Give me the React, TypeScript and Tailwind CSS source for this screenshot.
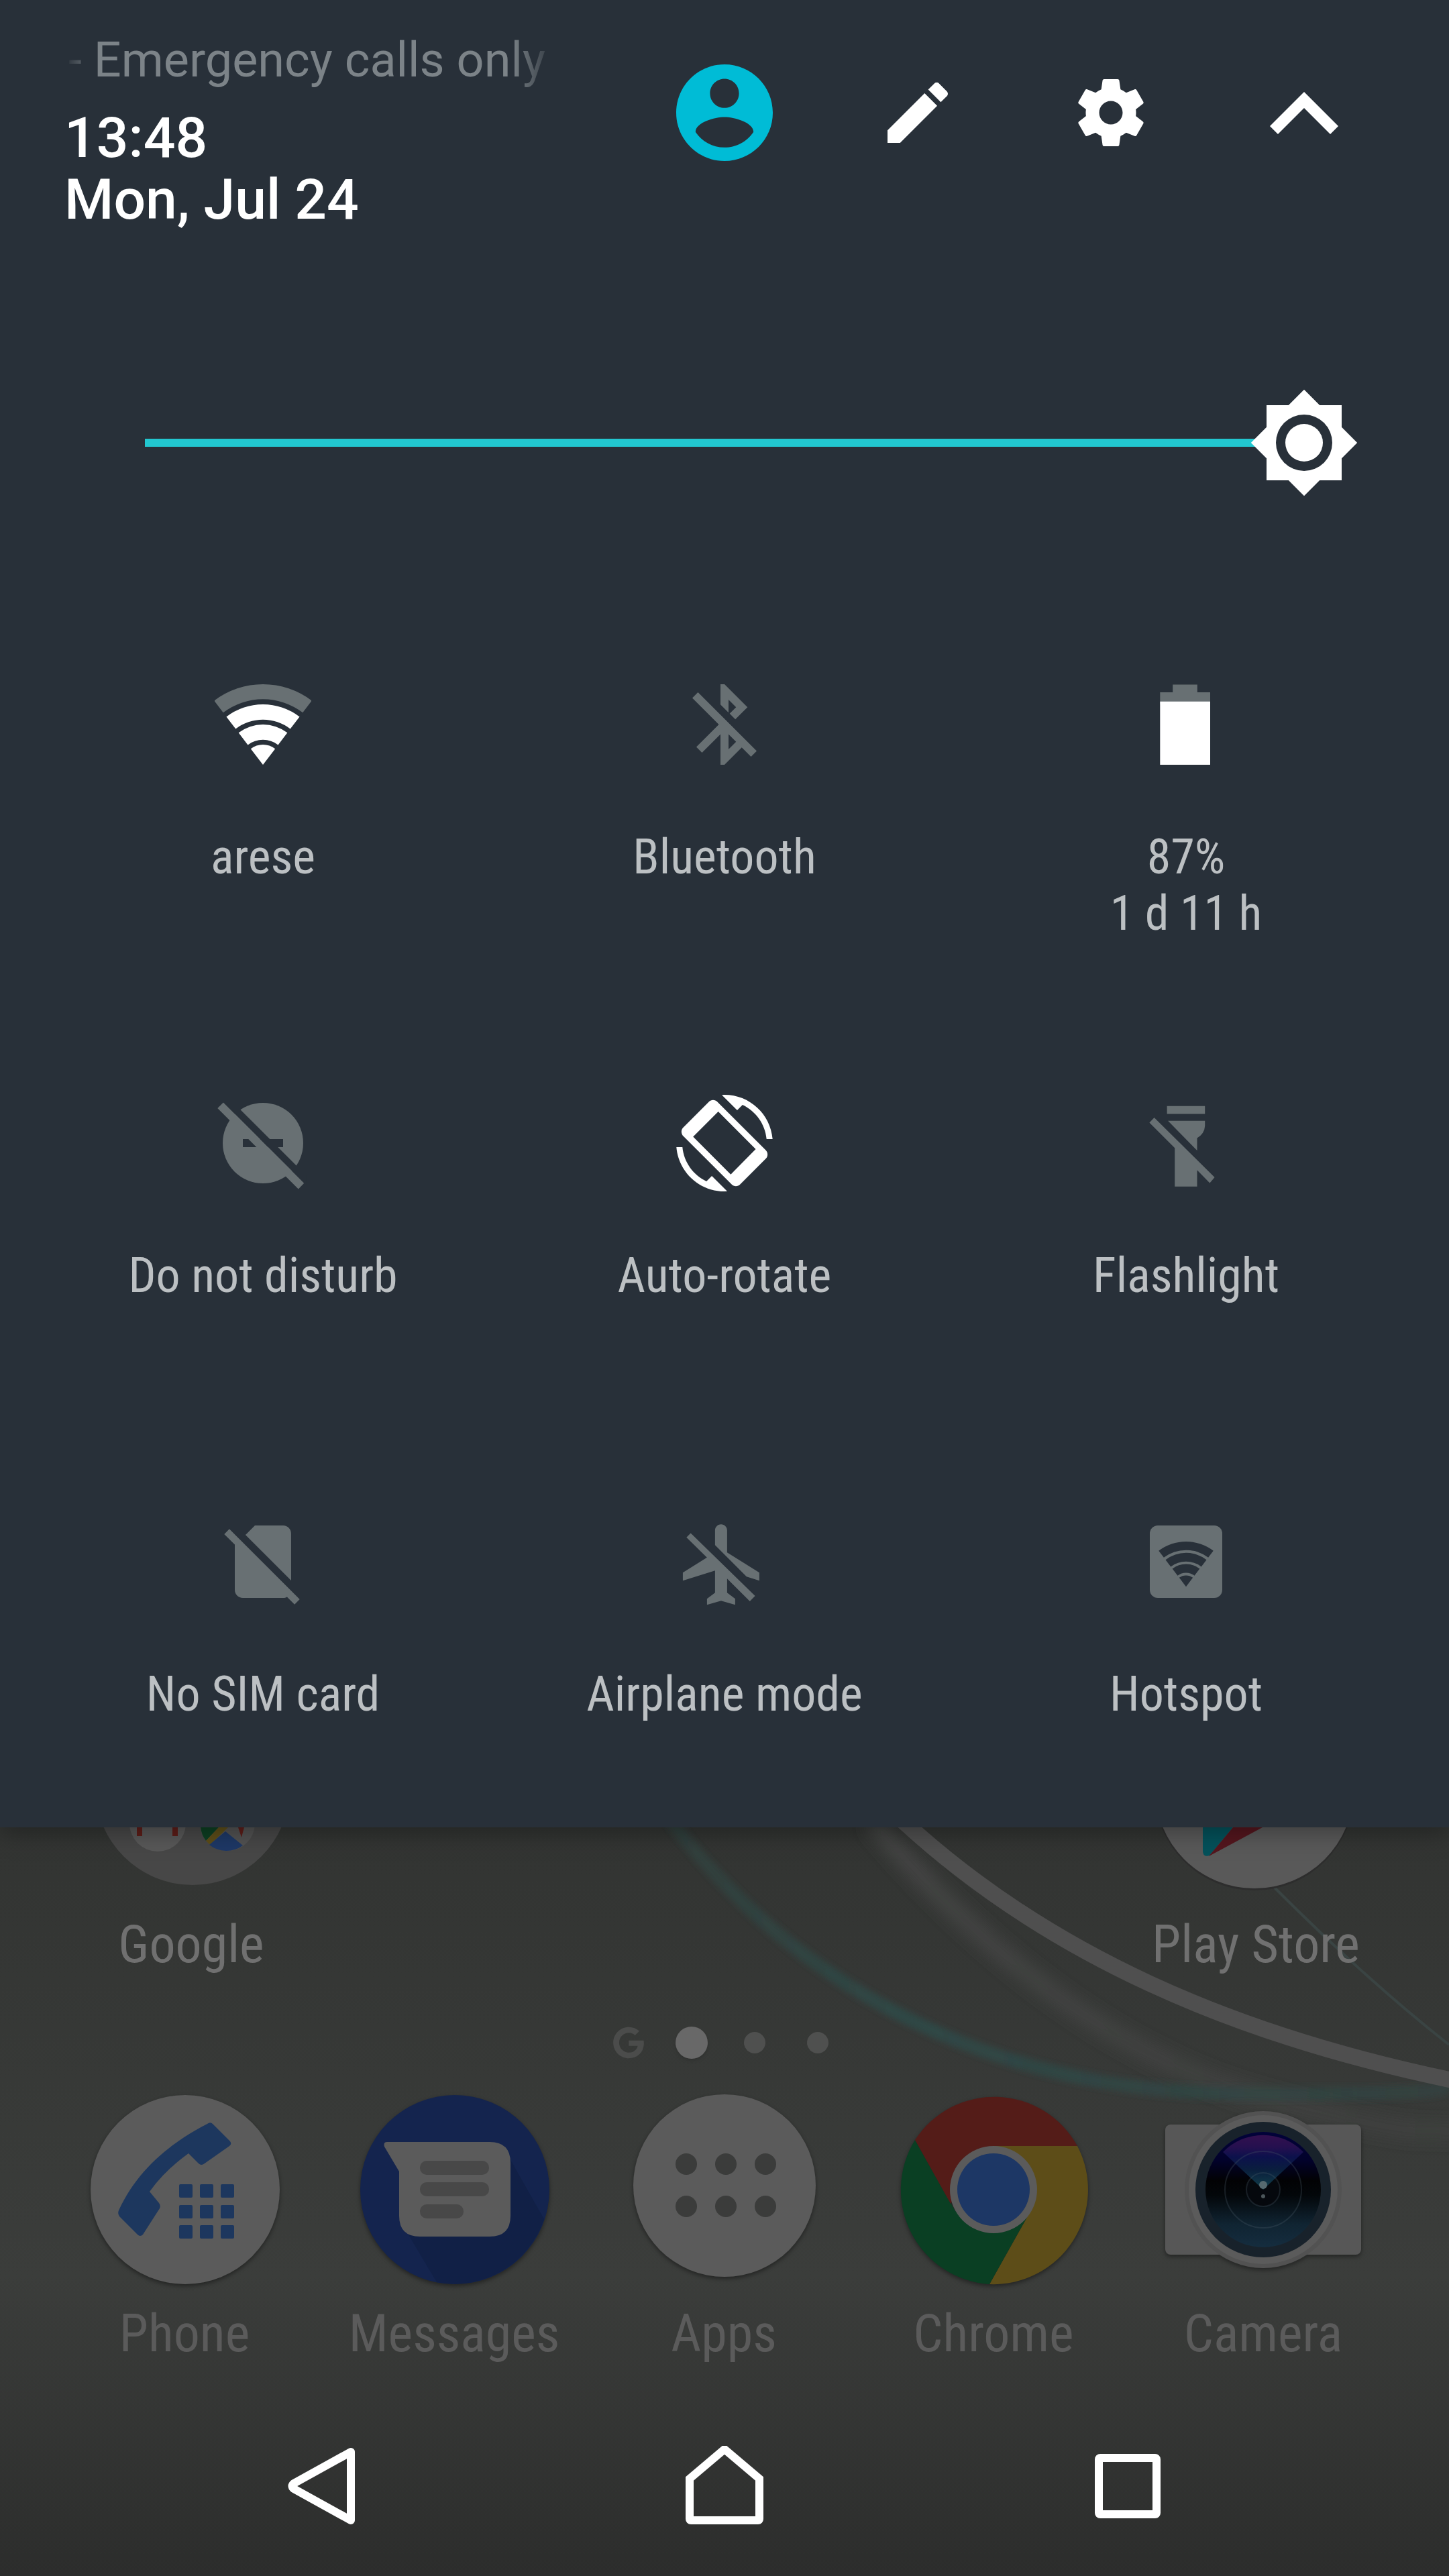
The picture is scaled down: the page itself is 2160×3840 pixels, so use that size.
import { useState, type ReactNode } from 'react'
import { FaGoogle } from 'react-icons/fa'

const PANEL = '#283039'
const DIM = '#687073'

// Ring segment of a wifi fan, with its tip at (cx, cy)
const fanBand = (cx: number, cy: number, outer: number, inner: number) => {
  const s = 0.606
  const c = 0.795
  return [
    `M${cx - outer * s} ${cy - outer * c}`,
    `A${outer} ${outer} 0 0 1 ${cx + outer * s} ${cy - outer * c}`,
    `L${cx + inner * s} ${cy - inner * c}`,
    `A${inner} ${inner} 0 0 0 ${cx - inner * s} ${cy - inner * c}z`,
  ].join('')
}

const TileIcon = ({ children, viewBox = '0 0 24 24' }: { children: ReactNode; viewBox?: string }) => (
  <svg viewBox={viewBox} className="size-[144px] shrink-0" fill={DIM} aria-hidden="true">
    {children}
  </svg>
)

const WifiIcon = () => (
  <TileIcon>
    <path d={fanBand(12, 22, 20, 16.3)} />
    <g fill="#fff">
      <path d={fanBand(12, 22, 15, 11.2)} />
      <path d={fanBand(12, 22, 10, 6.2)} />
      <path d={fanBand(12, 22, 5, 0.01)} />
    </g>
  </TileIcon>
)

const BluetoothOffIcon = () => (
  <TileIcon>
    <path d="M13 5.83l1.88 1.88-1.6 1.6 1.41 1.41 3.02-3.02L12 2h-1v5.03l2 2v-3.2zM5.41 4L4 5.41 10.59 12 5 17.59 6.41 19 11 14.41V22h1l4.29-4.29 2.3 2.29L20 18.59 5.41 4zM13 18.17v-3.76l1.88 1.88L13 18.17z" />
  </TileIcon>
)

const BatteryIcon = () => (
  <TileIcon>
    <path d="M8.7 2.1h6.1V4h3.2v3H5.55V4H8.7z" />
    <path d="M5.55 6.3H18V22H5.55z" fill="#fff" />
  </TileIcon>
)

const DndOffIcon = () => (
  <TileIcon>
    <circle cx="12" cy="12" r="10" />
    <path d="M7 11h10v2H7z" fill={PANEL} />
    <path d="M2 1.75L4.45 1.75 22.8 20.1 22.8 22.5z" fill={PANEL} />
    <path d="M.72 3.35L2.15 1.9 22.2 21.95 20.8 23.4z" />
  </TileIcon>
)

const RotateIcon = () => (
  <TileIcon>
    <g fill="#fff" fillRule="evenodd">
      <path d="M16.48 2.52c3.27 1.55 5.61 4.72 5.97 8.48h1.5C23.44 4.84 18.29 0 12 0l-.66.03 3.81 3.81 1.33-1.32zM7.52 21.48C4.25 19.94 1.91 16.76 1.55 13H.05C.56 19.16 5.71 24 12 24l.66-.03-3.81-3.81-1.33 1.32z" />
      <path d="M10.23 1.75c-.59-.59-1.54-.59-2.12 0L1.75 8.11c-.59.59-.59 1.54 0 2.12l12.02 12.02c.59.59 1.54.59 2.12 0l6.36-6.36c.59-.59.59-1.54 0-2.12L10.23 1.75zM10.45 4.15L4.2 10.4l9.35 9.4 6.2-6.3z" />
    </g>
  </TileIcon>
)

const FlashlightOffIcon = () => (
  <TileIcon>
    <path d="M7.27 2.8h9.43v1.95H7.27zM7.5 6.45h9.2v1.3q-.1 1.9-1.95 3v3.1z" />
    <path d="M4.1 5.67L19.1 20.5l-1.2 1.4-3.15-3.2v4.1H9.2v-9.6L2.9 6.9z" />
  </TileIcon>
)

const NoSimIcon = () => (
  <TileIcon>
    <path d="M18.99 5c0-1.1-.89-2-1.99-2h-7L7.66 5.34 19 16.68 18.99 5zM3.65 3.88L2.38 5.15 5 7.77V19c0 1.1.9 2 2 2h10.01c.35 0 .67-.1.96-.26l1.88 1.88 1.27-1.27L3.65 3.88z" />
  </TileIcon>
)

const AirplaneOffIcon = () => (
  <TileIcon viewBox="0.35 -0.7 24 24">
    <path d="M13 9V3.5c0-.83-.67-1.5-1.5-1.5S10 2.67 10 3.5v3.68l7.83 7.83L21 16v-2l-8-5zM2.9 5.27l5.09 4.99L2 14v2l8-2.5V19l-2 1.5V22l3.5-1 3.5 1v-1.5L13 19v-3.5l5.65 5.65 1.3-1.35L3.95 4.2z" />
  </TileIcon>
)

const HotspotIcon = () => (
  <TileIcon>
    <rect x="3" y="3" width="18" height="18" rx="2" />
    <g fill={PANEL}>
      <path d={fanBand(12, 18.2, 11.2, 9.1)} />
      <path d={fanBand(12, 18.2, 8.4, 6.25)} />
      <path d={fanBand(12, 18.2, 5.6, 3.45)} />
      <path d={fanBand(12, 18.2, 2.8, 0.01)} />
    </g>
  </TileIcon>
)

const tiles: { lines: string[]; icon: ReactNode }[] = [
  { lines: ['arese'], icon: <WifiIcon /> },
  { lines: ['Bluetooth'], icon: <BluetoothOffIcon /> },
  { lines: ['87%', '1 d 11 h'], icon: <BatteryIcon /> },
  { lines: ['Do not disturb'], icon: <DndOffIcon /> },
  { lines: ['Auto-rotate'], icon: <RotateIcon /> },
  { lines: ['Flashlight'], icon: <FlashlightOffIcon /> },
  { lines: ['No SIM card'], icon: <NoSimIcon /> },
  { lines: ['Airplane mode'], icon: <AirplaneOffIcon /> },
  { lines: ['Hotspot'], icon: <HotspotIcon /> },
]

function Header() {
  return (
    <header className="flex items-start justify-between pl-24 pr-[72px]">
      <div className="pt-12 text-[84px] leading-[92px] font-medium text-white">
        <p className="mb-7 pl-1.5 pr-5 text-[72px] leading-[84px] font-normal whitespace-nowrap text-[#7c8388] [mask-image:linear-gradient(to_right,transparent,black_48px,black_calc(100%-72px),transparent)]">
          - Emergency calls only
        </p>
        <p>13:48</p>
        <p>Mon, Jul 24</p>
      </div>
      <div className="mt-24 flex h-[144px] text-white">
        <button aria-label="User" className="flex w-[288px] items-center justify-center text-[#00bcd6]">
          <svg viewBox="2 2 20 20" className="size-[144px]" fill="currentColor">
            <path d="M12 2C6.48 2 2 6.48 2 12s4.48 10 10 10 10-4.48 10-10S17.52 2 12 2zm0 3c1.66 0 3 1.34 3 3s-1.34 3-3 3-3-1.34-3-3 1.34-3 3-3zm0 14.2c-2.5 0-4.71-1.28-6-3.22.03-1.99 4-3.08 6-3.08 1.99 0 5.97 1.09 6 3.08-1.29 1.94-3.5 3.22-6 3.22z" />
          </svg>
        </button>
        <button aria-label="Edit" className="flex w-[288px] items-center justify-center">
          <svg viewBox="0 0 24 24" className="size-[120px]" fill="currentColor">
            <path d="M3 17.25V21h3.75L17.81 9.94l-3.75-3.75L3 17.25zM20.71 7.04c.39-.39.39-1.02 0-1.41l-2.34-2.34c-.39-.39-1.02-.39-1.41 0l-1.83 1.83 3.75 3.75 1.83-1.83z" />
          </svg>
        </button>
        <button aria-label="Settings" className="flex w-[288px] items-center justify-center">
          <svg viewBox="0 0 24 24" className="size-[120px]" fill="currentColor">
            <path d="M19.43 12.98c.04-.32.07-.64.07-.98s-.03-.66-.07-.98l2.11-1.65c.19-.15.24-.42.12-.64l-2-3.46c-.12-.22-.39-.3-.61-.22l-2.49 1c-.52-.4-1.08-.73-1.69-.98l-.38-2.65C14.46 2.18 14.25 2 14 2h-4c-.25 0-.46.18-.49.42l-.38 2.65c-.61.25-1.17.59-1.69.98l-2.49-1c-.23-.09-.49 0-.61.22l-2 3.46c-.13.22-.07.49.12.64l2.11 1.65c-.04.32-.07.65-.07.98s.03.66.07.98l-2.11 1.65c-.19.15-.24.42-.12.64l2 3.46c.12.22.39.3.61.22l2.49-1c.52.4 1.08.73 1.69.98l.38 2.65c.03.24.24.42.49.42h4c.25 0 .46-.18.49-.42l.38-2.65c.61-.25 1.17-.59 1.69-.98l2.49 1c.23.09.49 0 .61-.22l2-3.46c.12-.22.07-.49-.12-.64l-2.11-1.65zM12 15.5c-1.93 0-3.5-1.57-3.5-3.5s1.57-3.5 3.5-3.5 3.5 1.57 3.5 3.5-1.57 3.5-3.5 3.5z" />
          </svg>
        </button>
        <button aria-label="Collapse" className="flex w-[288px] items-center justify-center">
          <svg viewBox="6 8 12 7.41" className="h-[63px] w-[102px]" fill="currentColor">
            <path d="M12 8l-6 6 1.41 1.41L12 10.83l4.59 4.58L18 14z" />
          </svg>
        </button>
      </div>
    </header>
  )
}

function BrightnessSlider() {
  const [value, setValue] = useState(100)

  return (
    <div className="mt-[232px] grid h-[168px] px-[132px]">
      <div className="col-start-1 row-start-1 flex items-center px-[84px]">
        <div className="h-3 shrink-0 bg-[#22c7d0]" style={{ width: `${value}%` }} />
        <svg viewBox="0 0 24 24" className="-mx-[84px] size-[168px] shrink-0" fill="#fff" aria-hidden="true">
          <path d="M20 8.69V4h-4.69L12 .69 8.69 4H4v4.69L.69 12 4 15.31V20h4.69L12 23.31 15.31 20H20v-4.69L23.31 12 20 8.69z" />
          <circle cx="12" cy="12" r="6" fill={PANEL} />
          <circle cx="12" cy="12" r="4" />
        </svg>
        <div className="h-3 flex-1 bg-[#4a5359]" />
      </div>
      <input
        type="range"
        aria-label="Brightness"
        value={value}
        onChange={(e) => setValue(Number(e.target.value))}
        className="z-10 col-start-1 row-start-1 w-full cursor-pointer appearance-none bg-transparent [&::-webkit-slider-thumb]:size-[168px] [&::-webkit-slider-thumb]:appearance-none"
      />
    </div>
  )
}

const WallpaperLines = () => (
  <svg
    viewBox="0 0 2160 1116"
    preserveAspectRatio="none"
    className="pointer-events-none absolute inset-0 -z-10 size-full"
    fill="none"
    aria-hidden="true"
  >
    <defs>
      <filter id="soft" x="-10%" y="-10%" width="120%" height="120%">
        <feGaussianBlur stdDeviation="4" />
      </filter>
      <filter id="softer" x="-10%" y="-10%" width="120%" height="120%">
        <feGaussianBlur stdDeviation="11" />
      </filter>
      <linearGradient id="teal" gradientUnits="userSpaceOnUse" x1="1000" y1="0" x2="2160" y2="0">
        <stop offset="0" stopColor="#2f4441" stopOpacity="0.6" />
        <stop offset="0.3" stopColor="#2f4745" />
        <stop offset="1" stopColor="#2f4745" stopOpacity="0.5" />
      </linearGradient>
      <linearGradient id="haze" gradientUnits="userSpaceOnUse" x1="1300" y1="0" x2="2160" y2="0">
        <stop offset="0" stopColor="#434443" />
        <stop offset="1" stopColor="#434443" stopOpacity="0.5" />
      </linearGradient>
    </defs>
    <path d="M1300 -10C1440 160 1650 345 1900 408S2100 445 2180 455" stroke="url(#haze)" strokeWidth="30" filter="url(#softer)" />
    <path d="M1000 -10C1150 190 1420 395 1850 397S2100 385 2180 376" stroke="url(#teal)" strokeWidth="20" filter="url(#soft)" />
    <path d="M1340 -15C1560 190 1840 310 2170 378" stroke="#4f4f4f" strokeWidth="24" />
    <path d="M1900 90Q2040 230 2160 324" stroke="#3a4443" strokeWidth="4" />
  </svg>
)

const FolderIcon = () => (
  <svg viewBox="0 0 300 96" className="h-24 w-[300px]" aria-hidden="true">
    <circle cx="152" cy="-59" r="145" fill="#474747" />
    <circle cx="100" cy="-6" r="42" fill="#585858" />
    <path d="M69 0h8v13h-8zM122 0h8v13h-8z" fill="#5c1d18" />
    <circle cx="204" cy="-6" r="41" fill="#525252" />
    <path d="M164 0a41 41 0 0 0 8 20L191 0z" fill="#0d3f22" />
    <path d="M172 20l6 6L205 0H191z" fill="#5d4d18" />
    <path d="M177 26a41 41 0 0 0 50 1L201 6z" fill="#1e3866" />
    <path d="M220 0h9l-4 15z" fill="#5c1d18" />
  </svg>
)

const PlayIcon = () => (
  <svg viewBox="0 0 300 96" className="h-24 w-[300px]" aria-hidden="true">
    <circle cx="148" cy="-55" r="149" fill="#2d2d2d" />
    <circle cx="148" cy="-57" r="148" fill="#595959" />
    <path d="M71 0h45L81 42Q71 45 71 35z" fill="#04515a" />
    <path d="M116 0h44L80 43z" fill="#54161e" />
  </svg>
)

const PhoneIcon = () => (
  <>
    <circle cx="147" cy="146" r="141" fill="#5b5b5b" />
    <g fill="#1d375e">
      <path d="M180 48q5-4 9 1l25 25q3 4-1 7l-37 26q-5 4-9 0l-15-15q-36 26-58 57l14 17q3 4 1 8l-25 39q-4 4-8 0l-27-27q-3-4-1-9C74 121 118 80 180 48z" />
      {[138, 169, 199].map((y) =>
        [138, 169, 200].map((x) => <rect key={`${x}-${y}`} x={x} y={y} width="20" height="20" rx="2" />)
      )}
    </g>
  </>
)

const MessagesIcon = () => (
  <>
    <circle cx="147" cy="146" r="141" fill="#14244e" />
    <path d="M229 100L280 190A141 141 0 0 1 120 284L76 210z" fill="#112046" />
    <path d="M46 75H199q31 0 31 31v79q0 31-31 31H95q-31 0-31-31V119L42 82q-2-7 4-7z" fill="#5b5b5b" />
    <g fill="#484848">
      <rect x="95" y="103" width="103" height="21" rx="10" />
      <rect x="95" y="135" width="103" height="21" rx="10" />
      <rect x="95" y="168" width="65" height="21" rx="10" />
    </g>
  </>
)

const AppsIcon = () => (
  <>
    <circle cx="147" cy="140" r="136" fill="#5b5b5b" />
    {[108, 171].map((y) =>
      [90, 149, 208].map((x) => <circle key={`${x}-${y}`} cx={x} cy={y} r="16" fill="#3b3c3b" />)
    )}
  </>
)

const ChromeIcon = () => (
  <>
    <path d="M146 81H271A141 141 0 0 1 140 287L200 180z" fill="#5d4d18" />
    <path d="M29 72L89 178l57 33 54-31-60 107A141 141 0 0 1 29 72z" fill="#0a3f23" />
    <path d="M29 72A141 141 0 0 1 271 81H146L82 167z" fill="#541c18" />
    <circle cx="146" cy="146" r="65" fill="#5b5b5b" />
    <circle cx="146" cy="146" r="54" fill="#1d3765" />
  </>
)

const CameraIcon = () => (
  <>
    <defs>
      <linearGradient id="lens" x1="0" y1="0" x2="0" y2="1">
        <stop offset="0" stopColor="#02023a" />
        <stop offset="0.25" stopColor="#02022a" />
        <stop offset="0.42" stopColor="#020204" />
        <stop offset="0.55" stopColor="#03070a" />
        <stop offset="0.8" stopColor="#102432" />
        <stop offset="1" stopColor="#152d3f" />
      </linearGradient>
      <linearGradient id="flare" x1="0" y1="0" x2="0" y2="1">
        <stop offset="0" stopColor="#33104f" />
        <stop offset="0.22" stopColor="#25104f" />
        <stop offset="0.4" stopColor="#0c114c" />
        <stop offset="0.65" stopColor="#0a1f3d" />
        <stop offset="1" stopColor="#12414c" />
      </linearGradient>
    </defs>
    <rect x="0" y="49" width="292" height="194" rx="8" fill="#575757" />
    <circle cx="146" cy="146" r="117" fill="#525252" />
    <circle cx="146" cy="146" r="111" fill="#5b5b5b" />
    <circle cx="146" cy="146" r="101" fill="#18222b" />
    <circle cx="146" cy="146" r="86" fill="url(#lens)" />
    <circle cx="146" cy="146" r="25" fill="#05080d" />
    <path d="M146 146L86 90A84 84 0 0 1 206 90z" fill="url(#flare)" />
    <g fill="none" stroke="#4a5a66" strokeOpacity="0.3" strokeWidth="2">
      <circle cx="146" cy="146" r="57" />
      <circle cx="146" cy="146" r="25" />
    </g>
    <circle cx="146" cy="139" r="6" fill="#566a70" />
    <circle cx="146" cy="156" r="3" fill="#4b555a" />
  </>
)

const dock: { name: string; icon: ReactNode }[] = [
  { name: 'Phone', icon: <PhoneIcon /> },
  { name: 'Messages', icon: <MessagesIcon /> },
  { name: 'Apps', icon: <AppsIcon /> },
  { name: 'Chrome', icon: <ChromeIcon /> },
  { name: 'Camera', icon: <CameraIcon /> },
]

function HomeScreen() {
  return (
    <main className="[text-shadow:2px_3px_4px_rgba(0,0,0,0.6)]">
      <div className="flex justify-between pl-[87px] pr-[90px] text-[78px] leading-[88px] text-[#707070]">
        <button className="flex w-[396px] flex-col items-center gap-[35px]">
          <FolderIcon />
          Google
        </button>
        <button className="flex w-[396px] flex-col items-center gap-[35px]">
          <PlayIcon />
          Play Store
        </button>
      </div>
      <div className="mt-[78px] flex h-12 items-center justify-center pr-1">
        <div className="flex w-[94px] justify-center">
          <FaGoogle className="size-12 text-[#4b4c4b]" />
        </div>
        <div className="flex w-[94px] justify-center">
          <span className="size-12 rounded-full bg-[#686868] shadow-md" />
        </div>
        <div className="flex w-[94px] justify-center">
          <span className="size-8 rounded-full bg-[#4f504f]" />
        </div>
        <div className="flex w-[94px] justify-center">
          <span className="size-8 rounded-full bg-[#4f504f]" />
        </div>
      </div>
      <div className="mt-[49px] grid grid-cols-5 pl-[74px] pr-[76px] text-[78px] leading-[88px] text-[#5b5b5b]">
        {dock.map(({ name, icon }) => (
          <button key={name} className="flex flex-col items-center gap-[25px]">
            <svg
              viewBox="0 0 292 292"
              className="size-[292px] drop-shadow-[0_3px_3px_rgba(0,0,0,0.4)]"
              aria-hidden="true"
            >
              {icon}
            </svg>
            {name}
          </button>
        ))}
      </div>
    </main>
  )
}

function NavBar() {
  return (
    <nav className="mt-[49px] grid h-[268px] grid-cols-3 px-[180px]">
      <button aria-label="Back" className="flex items-center justify-center">
        <svg viewBox="0 0 120 120" className="size-[120px]" fill="none" stroke="#fff" strokeWidth="12" strokeLinejoin="round">
          <path d="M103 9V111L18 64Q13 60 18 56z" />
        </svg>
      </button>
      <button aria-label="Home" className="flex items-center justify-center">
        <svg viewBox="0 0 120 120" className="size-[120px]" fill="none" stroke="#fff" strokeWidth="12">
          <path d="M8 109V49L60 5l52 44v60q0 2-2 2H10q-2 0-2-2z" />
        </svg>
      </button>
      <button aria-label="Recent apps" className="flex items-center justify-center">
        <svg viewBox="0 0 120 120" className="size-[120px]" fill="none" stroke="#fff" strokeWidth="12">
          <rect x="18" y="18" width="86" height="84" rx="2" />
        </svg>
      </button>
    </nav>
  )
}

export default function App() {
  return (
    <div className="flex min-h-screen flex-col bg-[#2b2c2b] font-['Roboto_Condensed','Roboto',sans-serif]">
      <section className="relative z-10 bg-[#283039] pb-[72px] font-['Roboto',sans-serif] shadow-[0_6px_36px_rgba(0,0,0,0.35)]">
        <Header />
        <BrightnessSlider />
        <div className="mt-[264px] grid grid-cols-3 gap-y-[228px] px-12 font-['Roboto_Condensed','Roboto',sans-serif]">
          {tiles.map(({ lines, icon }) => (
            <button
              key={lines[0]}
              className="flex min-h-[396px] flex-col items-center gap-[84px] text-[72px] leading-[84px] text-[#bcc0c3]"
            >
              {icon}
              <span>
                {lines.map((line) => (
                  <span key={line} className="block">
                    {line}
                  </span>
                ))}
              </span>
            </button>
          ))}
        </div>
      </section>
      <div className="relative isolate flex-1 bg-linear-to-b from-[#323432] via-[#3b3d3b] via-60% to-[#2c2d2c]">
        <WallpaperLines />
        <HomeScreen />
        <NavBar />
      </div>
    </div>
  )
}
